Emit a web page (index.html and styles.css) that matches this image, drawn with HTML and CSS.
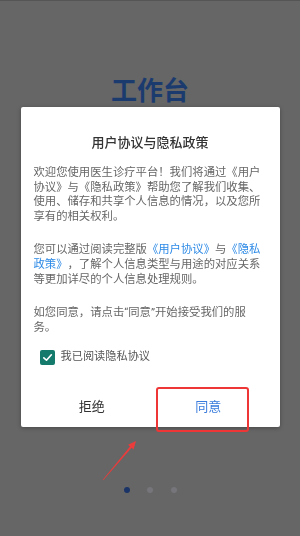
FILE: index.html
```html
<!DOCTYPE html>
<html lang="zh-CN">
<head>
    <meta charset="UTF-8">
    <meta name="viewport" content="width=device-width, initial-scale=1.0">
    <title>工作台</title>
    <link rel="stylesheet" href="styles.css">
</head>
<body>
    <!-- Page behind the dialog -->
    <div class="page">
        <h1 class="page-title">工作台</h1>
        <div class="slides"></div>
        <div class="dots">
            <span class="dot active"></span>
            <span class="dot"></span>
            <span class="dot"></span>
        </div>
    </div>

    <!-- Privacy dialog -->
    <div class="overlay">
        <div class="dialog">
            <h3 class="dialog-title">用户协议与隐私政策</h3>
            <p class="dialog-text">欢迎您使用医生诊疗平台！我们将通过《用户协议》与《隐私政策》帮助您了解我们收集、使用、储存和共享个人信息的情况，以及您所享有的相关权利。</p>
            <p class="dialog-text">您可以通过阅读完整版<a class="link" href="#">《用户协议》</a>与<a class="link" href="#">《隐私政策》</a>，了解个人信息类型与用途的对应关系等更加详尽的个人信息处理规则。</p>
            <p class="dialog-text">如您同意，请点击“同意”开始接受我们的服务。</p>
            <label class="check-row">
                <span class="checkbox">
                    <svg width="11" height="11" viewBox="0 0 12 12"><path d="M2 6.3 L4.9 9 L10.2 3" fill="none" stroke="#fff" stroke-width="1.8" stroke-linecap="round" stroke-linejoin="round"/></svg>
                </span>
                <span class="check-label">我已阅读隐私协议</span>
            </label>
            <div class="dialog-buttons">
                <button class="btn btn-refuse">拒绝</button>
                <button class="btn btn-agree">同意</button>
            </div>

            <!-- Annotation marks -->
            <div class="mark-box"></div>
        </div>
        <svg class="mark-arrow" width="40" height="45" viewBox="0 0 40 45">
            <polygon points="2.8,41.8 30,8.5 28.1,6.8 36,3 33.5,11.4 31.6,9.7 3.2,42.2" fill="#ec3b3b"/>
        </svg>
    </div>
</body>
</html>
```

FILE: styles.css
```css
* {
    box-sizing: border-box;
}
body {
    margin: 0;
    font-family: Roboto, "Noto Sans CJK SC", sans-serif;
    background-color: #666666;
    border-top: 1px solid #555555;
    text-spacing-trim: space-all;
}
.page {
    height: 535px;
    display: flex;
    flex-direction: column;
    align-items: center;
}
.page-title {
    margin: 75px 0 0;
    font-size: 26px;
    line-height: 30px;
    font-weight: 700;
    color: #1b3b6f;
}
.slides {
    height: 381px;
}
.dots {
    display: flex;
    gap: 17.5px;
}
.dot {
    width: 6px;
    height: 6px;
    border-radius: 50%;
    background-color: #75757b;
}
.dot.active {
    background-color: #1b3467;
}
.overlay {
    position: fixed;
    inset: 0;
    display: flex;
    justify-content: center;
    align-items: center;
}
.dialog {
    position: relative;
    width: 259px;
    height: 320px;
    margin-top: -2px;
    padding: 26px 13px 0;
    background-color: #fff;
    border-radius: 2px;
    box-shadow: 0 1px 4px rgba(0, 0, 0, 0.3);
}
.dialog-title {
    margin: 0 0 12px;
    text-align: center;
    font-size: 13px;
    line-height: 20px;
    font-weight: 500;
    color: #333;
}
.dialog-text {
    margin: 0 0 19px;
    font-size: 11.35px;
    line-height: 14.6px;
    color: #666;
}
.link {
    color: #2d8ae6;
    text-decoration: none;
}
.check-row {
    display: flex;
    align-items: center;
    gap: 6px;
    margin: -4px 0 0 6px;
}
.checkbox {
    width: 15px;
    height: 15px;
    border-radius: 2px;
    background-color: #137a6c;
    display: flex;
    justify-content: center;
    align-items: center;
}
.check-label {
    font-size: 11.2px;
    line-height: 16px;
    color: #555;
}
.dialog-buttons {
    display: flex;
    margin-top: 19px;
}
.btn {
    flex: 1;
    height: 42px;
    border: none;
    background: none;
    font-family: inherit;
    font-size: 13px;
    cursor: pointer;
}
.btn-refuse {
    color: #333;
}
.btn-agree {
    color: #3a7cdc;
}
.mark-box {
    position: absolute;
    left: 135px;
    top: 280px;
    width: 93px;
    height: 45px;
    border: 2px solid #ee3636;
    border-radius: 3px;
}
.mark-arrow {
    position: absolute;
    left: 100px;
    top: 438px;
}
```
